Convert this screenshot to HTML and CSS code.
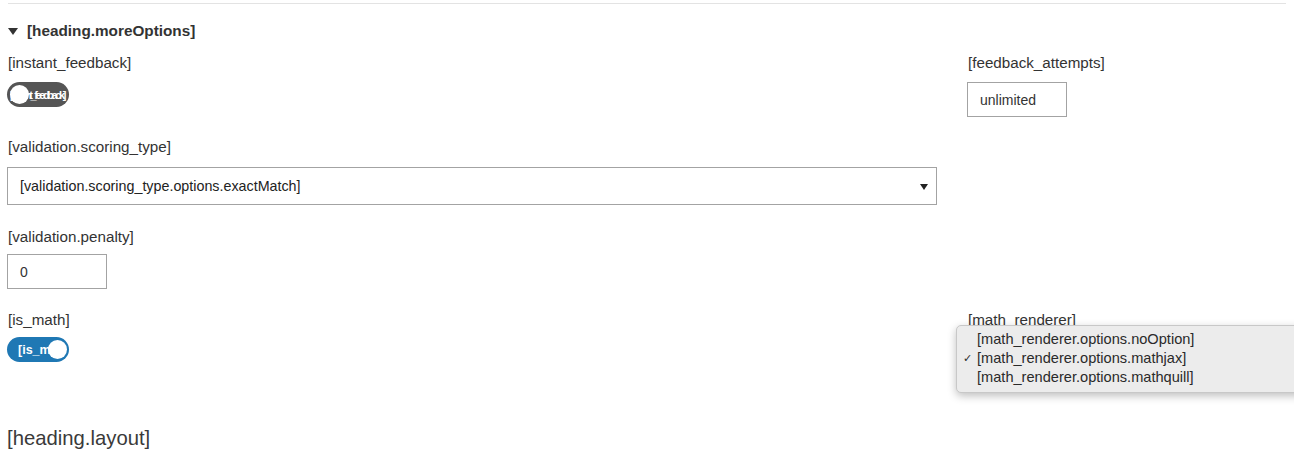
FILE: index.html
```html
<!DOCTYPE html>
<html>
<head>
<meta charset="utf-8">
<link rel="stylesheet" href="styles.css">
</head>
<body>
<div class="page">
  <div class="rule"></div>
  <div class="section-head"><span class="caret"></span><span class="head-text">[heading.moreOptions]</span></div>

  <div class="row row1">
    <div class="field">
      <div class="label">[instant_feedback]</div>
      <div class="toggle off"><span class="knob"></span><span class="ttext">[instant_feedback]</span></div>
    </div>
    <div class="field">
      <div class="label">[feedback_attempts]</div>
      <div class="input small">unlimited</div>
    </div>
  </div>

  <div class="row row2">
    <div class="field">
      <div class="label">[validation.scoring_type]</div>
      <div class="select"><span>[validation.scoring_type.options.exactMatch]</span><span class="arrow"></span></div>
    </div>
    <div></div>
  </div>

  <div class="row row3">
    <div class="field">
      <div class="label">[validation.penalty]</div>
      <div class="input small">0</div>
    </div>
    <div></div>
  </div>

  <div class="row row4">
    <div class="field">
      <div class="label">[is_math]</div>
      <div class="toggle on"><span class="ttext">[is_ma</span><span class="knob"></span></div>
    </div>
    <div class="field menu-host">
      <div class="label">[math_renderer]</div>
      <div class="menu">
        <div class="item">[math_renderer.options.noOption]</div>
        <div class="item checked"><span class="check">✓</span>[math_renderer.options.mathjax]</div>
        <div class="item">[math_renderer.options.mathquill]</div>
      </div>
    </div>
  </div>

  <div class="layout-head">[heading.layout]</div>
</div>
</body>
</html>
```

FILE: styles.css
```css
html, body {
  margin: 0;
  padding: 0;
  background: #fff;
}
body {
  font-family: "Liberation Sans", Arial, sans-serif;
  font-size: 14px;
  color: #333;
  width: 1294px;
  height: 457px;
  overflow: hidden;
}
.page {
  padding: 3px 0 0 0;
}
.rule {
  height: 1px;
  background: #e3e3e3;
  margin: 0 8px 0 8px;
}
.section-head {
  display: flex;
  align-items: center;
  height: 20px;
  margin-top: 17px;
  padding-left: 8px;
  font-weight: bold;
  font-size: 15.3px;
}
.caret {
  width: 0;
  height: 0;
  border-left: 5px solid transparent;
  border-right: 5px solid transparent;
  border-top: 7px solid #333;
  margin-right: 9px;
  margin-top: 1px;
}
.row {
  display: grid;
  grid-template-columns: 960px 1fr;
  padding-left: 7px;
}
.row1 { margin-top: 12px; }
.row2 { margin-top: 20px; }
.row3 { margin-top: 22px; }
.row4 { margin-top: 21px; }
.label {
  font-size: 15.2px;
  line-height: 20px;
  padding-left: 1px;
  margin-bottom: 9px;
}
.row2 .label { margin-bottom: 10px; }
.row3 .label { margin-bottom: 7px; }
.row4 .label { margin-bottom: 7px; }
.toggle {
  width: 62px;
  height: 25px;
  border-radius: 13px;
  display: flex;
  align-items: center;
  overflow: hidden;
  box-sizing: border-box;
  position: relative;
}
.toggle.off {
  background: #555;
  padding-left: 3px;
}
.toggle.on {
  background: #1f78b4;
  padding-left: 11px;
  padding-right: 2px;
}
.knob {
  width: 19px;
  height: 19px;
  border-radius: 50%;
  background: #fff;
  flex: none;
}
.toggle.off .knob {
  position: absolute;
  left: 3px;
  top: 3px;
  z-index: 1;
}
.toggle.off .ttext {
  color: #fff;
  font-size: 11px;
  font-weight: bold;
  letter-spacing: -2.4px;
  white-space: nowrap;
  padding-left: 0;
}
.toggle.on .ttext {
  color: #fff;
  font-size: 12.5px;
  font-weight: bold;
  white-space: nowrap;
  flex: 1;
  overflow: hidden;
}
.toggle.on .knob {
  margin-left: -12px;
}
.input {
  height: 35px;
  border: 1px solid #a3a3a3;
  box-sizing: border-box;
  display: flex;
  align-items: center;
  padding-left: 12px;
  font-size: 14px;
  color: #333;
}
.input.small { width: 100px; }
.select {
  width: 930px;
  height: 38px;
  border: 1px solid #a3a3a3;
  box-sizing: border-box;
  display: flex;
  align-items: center;
  justify-content: space-between;
  padding-left: 12px;
  padding-right: 8px;
  font-size: 14.3px;
  color: #222;
}
.arrow {
  width: 0;
  height: 0;
  border-left: 4px solid transparent;
  border-right: 4px solid transparent;
  border-top: 6px solid #222;
  margin-top: 2px;
}
.menu-host {
  position: relative;
}
.menu {
  position: absolute;
  left: -11px;
  top: 15px;
  width: 360px;
  background: #ececec;
  border: 1px solid #c8c8c8;
  border-radius: 5px;
  box-shadow: 0 3px 8px rgba(0,0,0,0.25);
  padding: 4px 0 5px 0;
  box-sizing: border-box;
}
.item {
  line-height: 19px;
  padding-left: 20px;
  font-size: 14.6px;
  color: #2a2a2a;
  position: relative;
}
.check {
  position: absolute;
  left: 6px;
  font-size: 11px;
}
.layout-head {
  margin-top: 64px;
  padding-left: 7px;
  font-size: 20.3px;
  line-height: 24px;
  color: #3a3a3a;
}
```
